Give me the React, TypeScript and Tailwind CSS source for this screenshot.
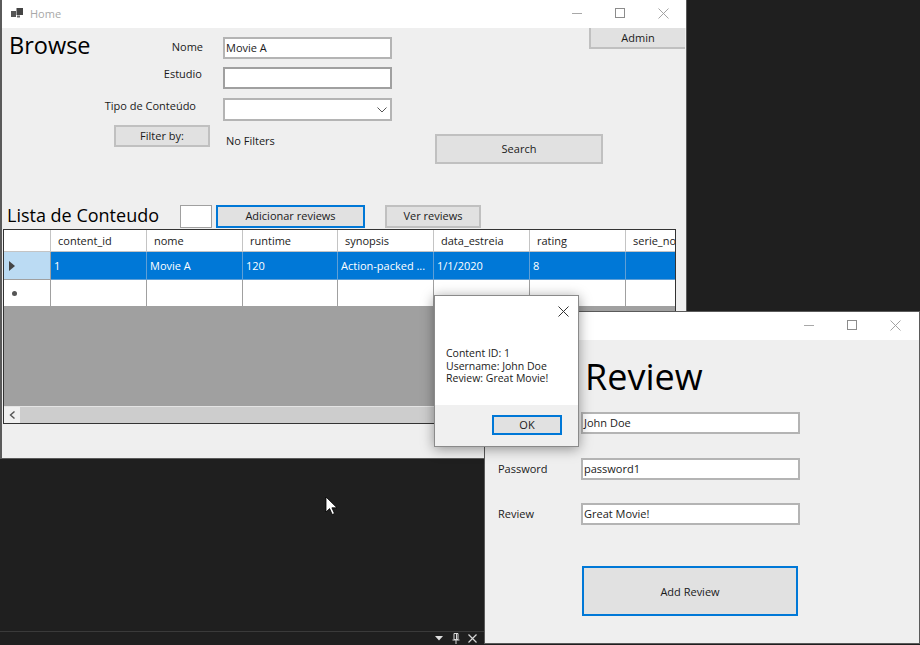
const ui = "font-['Open_Sans','Noto_Sans',sans-serif] text-[11px] leading-none text-[#1a1a1a]";

function WinControls() {
  return (
    <div className="flex items-center">
      <svg width="11" height="11" viewBox="0 0 11 11"><path d="M0 5.5h10" stroke="#a8a8a8" strokeWidth="1" /></svg>
      <svg className="ml-[32px]" width="11" height="11" viewBox="0 0 11 11"><rect x="0.5" y="0.5" width="9" height="9" fill="none" stroke="#8c8c8c" /></svg>
      <svg className="ml-[32px]" width="11" height="11" viewBox="0 0 11 11"><path d="M0.5 0.5l10 10M10.5 0.5l-10 10" stroke="#9a9a9a" strokeWidth="0.9" /></svg>
    </div>
  );
}

function Btn({ label, className }: { label: string; className: string }) {
  return (
    <div className={`flex items-center justify-center pb-[1px] bg-[#e1e1e1] ${className}`}>{label}</div>
  );
}

function Input({ value, className = "" }: { value?: string; className?: string }) {
  return (
    <div className={`flex items-center pb-[1px] bg-white pl-[1px] ${className}`}>{value}</div>
  );
}

const columns = ["content_id", "nome", "runtime", "synopsis", "data_estreia", "rating", "serie_nome"];
const row = ["1", "Movie A", "120", "Action-packed ...", "1/1/2020", "8", ""];
const gridCols = "grid grid-cols-[47px_96px_96px_95px_96px_96px_96px_51px]";

function DataGrid() {
  return (
    <div className="mt-[1px] ml-[1px] w-[673px] h-[195px] border border-[#333] flex flex-col bg-[#a0a0a0] overflow-hidden">
      <div className={`${gridCols} h-[22px] bg-white`}>
        <div className="border-r border-b border-[#c4c4c4]" />
        {columns.map((c) => (
          <div key={c} className="flex items-center pl-[7px] border-r border-b border-[#c4c4c4] overflow-hidden whitespace-nowrap">{c}</div>
        ))}
      </div>
      <div className={`${gridCols} h-[28px] bg-[#0078d7] text-white`}>
        <div className="flex items-center pl-[5px] bg-[#bbdbf3] border-r border-b border-[#a0a0a0]">
          <svg width="6" height="10" viewBox="0 0 6 10"><path d="M0 0l6 5-6 5z" fill="#444" /></svg>
        </div>
        {row.map((c, i) => (
          <div key={i} className="flex items-center pl-[3px] border-r border-b border-[#5f9fd6] whitespace-nowrap overflow-hidden">{c}</div>
        ))}
      </div>
      <div className={`${gridCols} h-[27px] bg-white`}>
        <div className="flex items-center pl-[8px] border-r border-b border-[#a0a0a0]">
          <div className="w-[5px] h-[5px] rounded-full bg-[#555]" />
        </div>
        {row.map((_, i) => (
          <div key={i} className="border-r border-b border-[#a0a0a0]" />
        ))}
      </div>
      <div className="flex-1" />
      <div className="h-[17px] flex bg-[#cdcdcd] border-t border-[#e4e4e4]">
        <div className="w-[16px] flex items-center justify-center bg-[#f0f0f0]">
          <svg width="7" height="8" viewBox="0 0 7 8"><path d="M5.5 0.5L1.5 4l4 3.5" fill="none" stroke="#555" strokeWidth="1.4" /></svg>
        </div>
      </div>
    </div>
  );
}

function HomeWindow() {
  return (
    <div className="absolute left-0 top-0 w-[687px] h-[459px] border-l-2 border-r border-b border-[#5a5a5a] flex flex-col bg-[#efefef]">
      <div className="h-[28px] shrink-0 bg-white flex items-center pl-[9px] pr-[17px] pb-[2px]">
        <svg width="13" height="12" viewBox="0 0 13 12">
          <rect x="0" y="4" width="5" height="6" fill="#555" />
          <rect x="5.5" y="1" width="6.5" height="7" fill="#444" />
          <rect x="6" y="8.5" width="3" height="2" fill="#666" />
        </svg>
        <span className="ml-[6px] text-[#a8a8a8]">Home</span>
        <div className="ml-auto"><WinControls /></div>
      </div>

      <div className="flex h-[176px] shrink-0">
        <div className="w-[103px] pl-[7px] pt-[2px] text-[23.5px] leading-[30px] text-black">Browse</div>
        <div className="w-[105px] flex flex-col items-end">
          <span className="mt-[13px] mr-[7px]">Nome</span>
          <span className="mt-[16px] mr-[8px]">Estudio</span>
          <span className="mt-[21px] mr-[14px] whitespace-nowrap">Tipo de Conteúdo</span>
          <Btn label="Filter by:" className="mt-[14px] w-[96px] h-[22px] border-2 border-[#c0c0c0]" />
        </div>
        <div className="ml-[13px] w-[169px] flex flex-col">
          <Input value="Movie A" className="mt-[9px] h-[22px] border-2 border-[#b4b4b4]" />
          <Input className="mt-[8px] h-[22px] border-2 border-[#a0a0a0]" />
          <div className="mt-[9px] h-[23px] flex items-center justify-end pr-[3px] bg-white border-2 border-[#b4b4b4]">
            <svg width="10" height="6" viewBox="0 0 10 6"><path d="M0.5 0.5L5 5l4.5-4.5" fill="none" stroke="#555" /></svg>
          </div>
          <span className="mt-[14px] ml-[3px]">No Filters</span>
        </div>
        <div className="ml-[43px] w-[250px] flex flex-col">
          <Btn label="Admin" className="self-end w-[96px] h-[21px] border-l-2 border-b-2 border-[#c0c0c0]" />
          <Btn label="Search" className="mt-[85px] w-[168px] h-[30px] border-2 border-[#c0c0c0]" />
        </div>
      </div>

      <div className="flex h-[24px] shrink-0 items-center pl-[5px]">
        <span className="w-[173px] pb-[3px] text-[18px] leading-none text-black">Lista de Conteudo</span>
        <div className="w-[32px] h-[23px] bg-white border border-[#a0a0a0]" />
        <Btn label="Adicionar reviews" className="ml-[4px] w-[149px] h-[23px] border-2 border-[#0078d7]" />
        <Btn label="Ver reviews" className="ml-[20px] w-[96px] h-[23px] border-2 border-[#c0c0c0]" />
      </div>

      <DataGrid />
    </div>
  );
}

function ReviewWindow() {
  const fields = [
    { label: "Password", value: "password1", mt: "mt-[24px]" },
    { label: "Review", value: "Great Movie!", mt: "mt-[23px]" },
  ];
  return (
    <div className="absolute left-[484px] top-[311px] w-[436px] h-[333px] border border-[#5a5a5a] flex flex-col bg-[#efefef]">
      <div className="h-[28px] shrink-0 bg-white flex items-center justify-end pr-[18px] pb-[2px]">
        <WinControls />
      </div>
      <div className="flex flex-col pl-[13px]">
        <div className="pl-[87px] mt-[14px] h-[46px] text-[36px] leading-[46px] text-black">Review</div>
        <div className="flex mt-[12px] pl-[83px]">
          <Input value="John Doe" className="w-[219px] h-[22px] border-2 border-[#b4b4b4]" />
        </div>
        {fields.map((f) => (
          <div key={f.label} className={`flex items-center ${f.mt}`}>
            <span className="w-[83px] pb-[2px]">{f.label}</span>
            <Input value={f.value} className="w-[219px] h-[22px] border-2 border-[#b4b4b4]" />
          </div>
        ))}
        <Btn label="Add Review" className="ml-[84px] mt-[41px] w-[216px] h-[50px] pt-[1px] border-2 border-[#0078d7]" />
      </div>
    </div>
  );
}

function MessageBox() {
  return (
    <div className="absolute left-[434px] top-[295px] w-[145px] h-[152px] border border-[#8a8a8a] shadow-[0_2px_12px_rgba(0,0,0,0.4)] flex flex-col bg-white">
      <div className="h-[30px] shrink-0 flex items-center justify-end pr-[9px]">
        <svg width="11" height="11" viewBox="0 0 11 11"><path d="M0.5 0.5l10 10M10.5 0.5l-10 10" stroke="#333" strokeWidth="1" /></svg>
      </div>
      <div className="flex-1 pl-[11px] pt-[21px] text-[10.5px] leading-[12.5px]">
        <div>Content ID: 1</div>
        <div>Username: John Doe</div>
        <div>Review: Great Movie!</div>
      </div>
      <div className="h-[41px] shrink-0 bg-[#f0f0f0] flex justify-end pr-[16px] pt-[10px]">
        <Btn label="OK" className="w-[70px] h-[20px] border-2 border-[#0078d7]" />
      </div>
    </div>
  );
}

function Cursor() {
  return (
    <svg className="absolute left-[325px] top-[496px]" width="13" height="20" viewBox="0 0 13 20">
      <path d="M1 1v15l3.6-3.4 2.6 5.9 2.3-1-2.6-5.7H12z" fill="#fff" stroke="#000" strokeWidth="0.8" />
    </svg>
  );
}

function DockTab() {
  return (
    <div className="absolute left-0 top-[631px] w-[484px] h-[14px] border-t border-[#3a3a3a] flex items-center justify-end pr-[7px]">
      <svg width="8" height="5" viewBox="0 0 8 5"><path d="M0 0h8L4 4.5z" fill="#e0e0e0" /></svg>
      <svg className="ml-[9px]" width="8" height="11" viewBox="0 0 8 11"><path d="M2 0.5h4v6H2zM0.5 7h7M4 7v4M4.5 1v5" fill="none" stroke="#d8d8d8" /></svg>
      <svg className="ml-[8px]" width="9" height="9" viewBox="0 0 9 9"><path d="M0.5 0.5l8 8M8.5 0.5l-8 8" stroke="#d8d8d8" strokeWidth="1.2" /></svg>
    </div>
  );
}

export default function App() {
  return (
    <div className={`relative w-[920px] h-[645px] overflow-hidden bg-[#1f1f1f] ${ui}`}>
      <DockTab />
      <HomeWindow />
      <ReviewWindow />
      <MessageBox />
      <Cursor />
    </div>
  );
}
